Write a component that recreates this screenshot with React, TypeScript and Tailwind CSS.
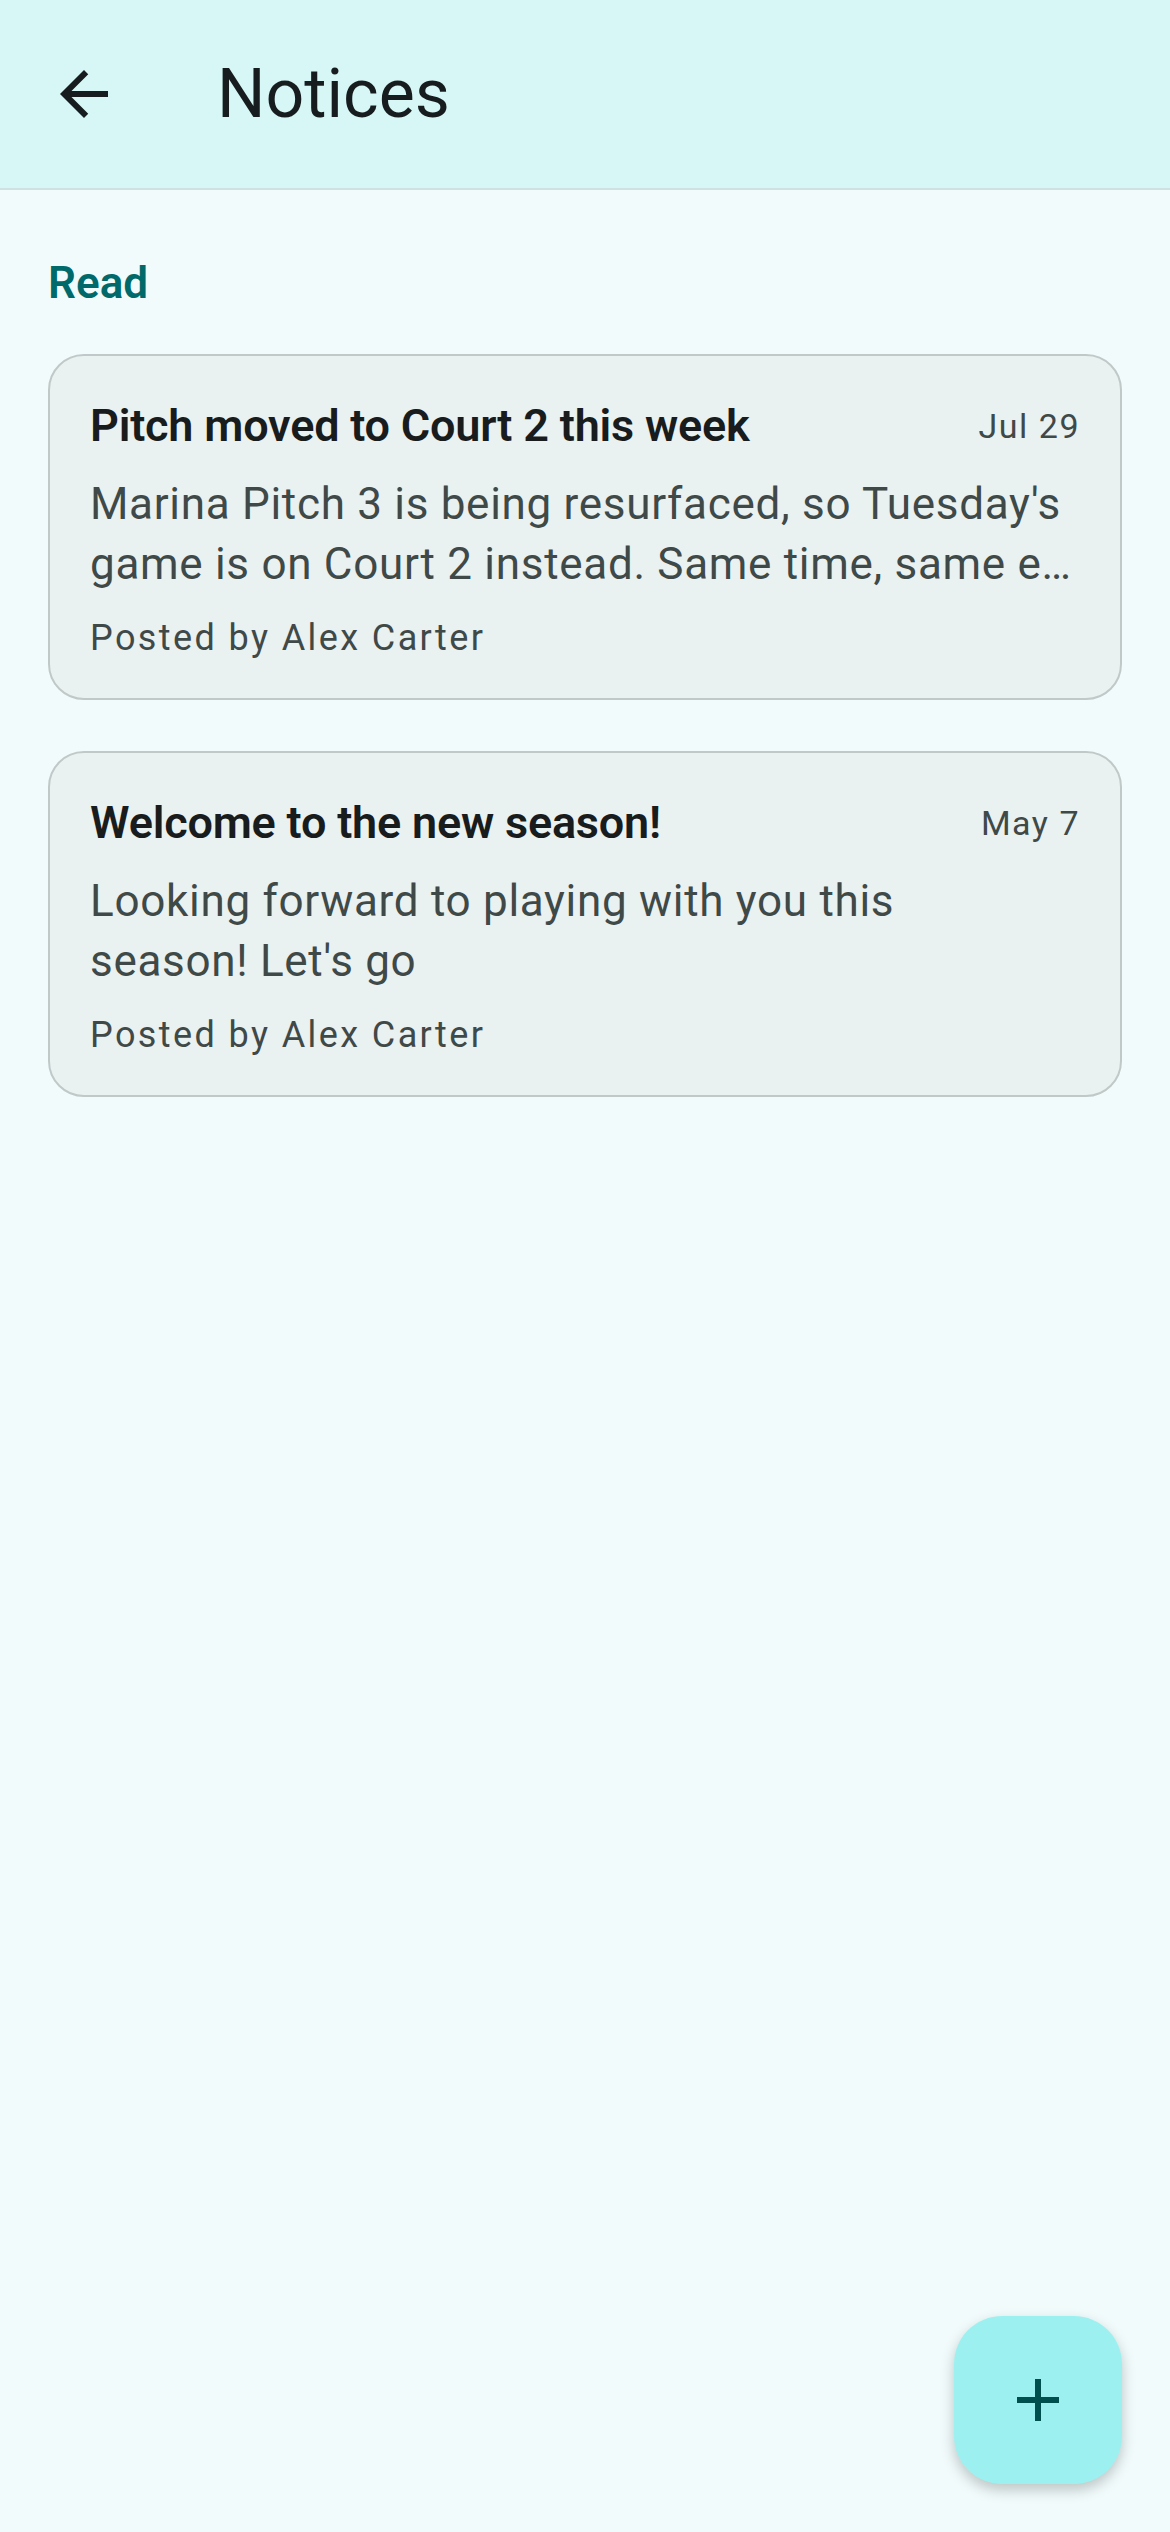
import React from 'react';

type Notice = {
  title: string;
  date: string;
  lines: string[];
  author: string;
};

const notices: Notice[] = [
  {
    title: 'Pitch moved to Court 2 this week',
    date: 'Jul 29',
    lines: ["Marina Pitch 3 is being resurfaced, so Tuesday's", 'game is on Court 2 instead. Same time, same e…'],
    author: 'Alex Carter',
  },
  {
    title: 'Welcome to the new season!',
    date: 'May 7',
    lines: ['Looking forward to playing with you this', "season! Let's go"],
    author: 'Alex Carter',
  },
];

const font = { fontFamily: 'Roboto, "Noto Sans", sans-serif' };

const NoticeCard: React.FC<{ notice: Notice }> = ({ notice }) => (
  <div className="rounded-[36px] border-2 border-[#c0c8c8] bg-[#eaf1f1] px-[40px] pt-[42px] pb-[36px]">
    <div className="flex items-center justify-between">
      <h2 className="text-[45px] leading-[56px] font-semibold text-[#191c1c] tracking-[-0.2px]">{notice.title}</h2>
      <span className="text-[34px] leading-[56px] text-[#3f4948] tracking-[1.5px]">{notice.date}</span>
    </div>
    <p className="mt-[20px] text-[44px] leading-[60px] text-[#3f4948] tracking-[0.7px]">
      {notice.lines.map((l, i) => (
        <span key={i} className="block whitespace-nowrap overflow-hidden">{l}</span>
      ))}
    </p>
    <p className="mt-[20px] text-[36px] leading-[48px] text-[#3f4948] tracking-[2.4px]">Posted by {notice.author}</p>
  </div>
);

const App: React.FC = () => {
  return (
    <div className="min-h-screen bg-[#f1fbfb]" style={font}>
      <header className="flex h-[190px] items-center border-b-2 border-[#cfe2e2] bg-[#d7f7f7]">
        <button className="ml-[48px] flex h-[72px] w-[72px] items-center justify-center text-[#171d1e]">
          <svg viewBox="0 0 24 24" className="h-[72px] w-[72px]" fill="currentColor">
            <path d="M20 11H7.83l5.59-5.59L12 4l-8 8 8 8 1.41-1.41L7.83 13H20v-2z" />
          </svg>
        </button>
        <h1 className="ml-[97px] text-[68px] leading-none text-[#171d1e]">Notices</h1>
      </header>

      <main className="px-[48px] pt-[63px]">
        <h3 className="text-[44px] leading-[60px] font-semibold text-[#006a6a]">Read</h3>
        <div className="mt-[41px] flex flex-col gap-[51px]">
          {notices.map((n) => (
            <NoticeCard key={n.title} notice={n} />
          ))}
        </div>
      </main>

      <button className="fixed right-[48px] bottom-[48px] flex h-[168px] w-[168px] items-center justify-center rounded-[48px] bg-[#9cf1f0] text-[#004f4f] shadow-[0_6px_14px_rgba(0,0,0,0.22)]">
        <svg viewBox="0 0 24 24" className="h-[72px] w-[72px]" fill="currentColor">
          <path d="M19 13h-6v6h-2v-6H5v-2h6V5h2v6h6v2z" />
        </svg>
      </button>
    </div>
  );
};

export default App;
